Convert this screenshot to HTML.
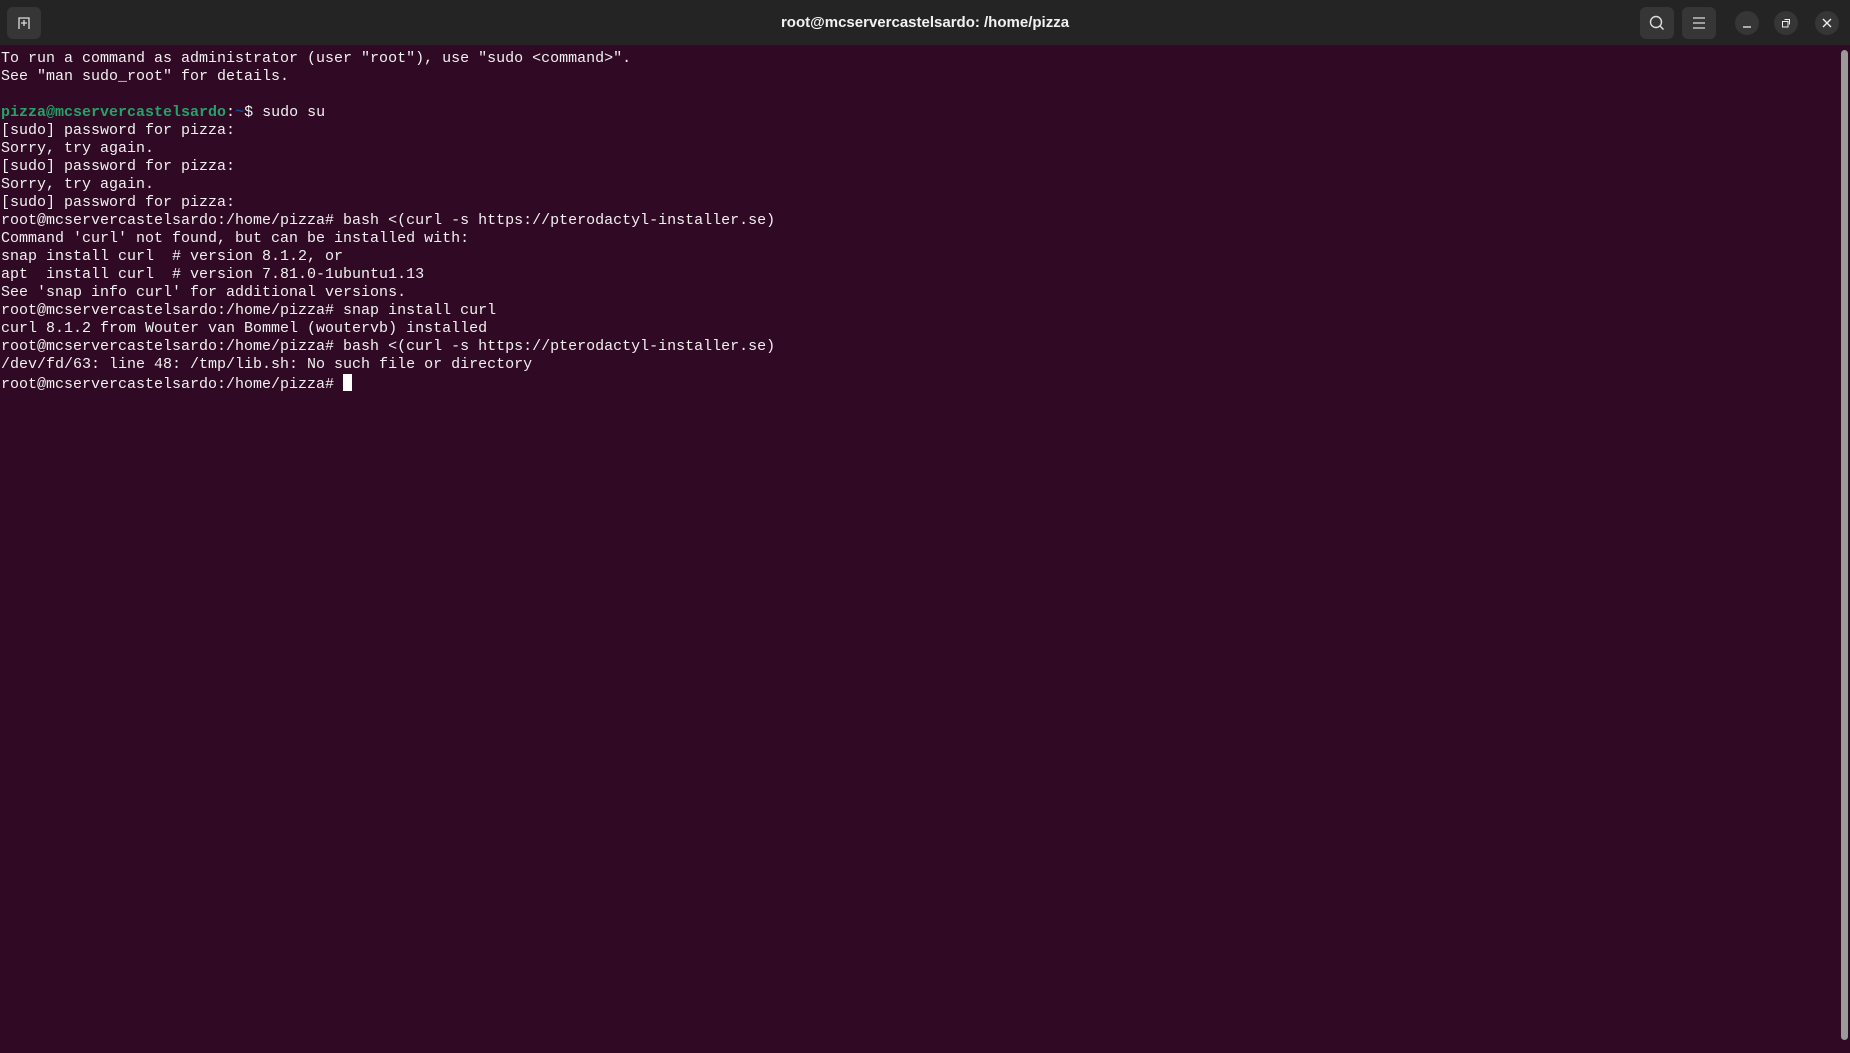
<!DOCTYPE html>
<html><head><meta charset="utf-8"><style>
html,body{margin:0;padding:0;width:1850px;height:1053px;overflow:hidden;background:#300a24}
.hdr{position:absolute;left:0;top:0;width:1850px;height:46px;background:#242424;border-bottom:1px solid #1a1a1a;box-sizing:border-box}
.title{position:absolute;left:0;right:0;top:0;height:46px;text-align:center;color:#f2f2f2;font:bold 15px "Liberation Sans",sans-serif;line-height:46px}
.btn{position:absolute;top:7px;width:34px;height:32px;border-radius:6px;background:#363636}
.cb{position:absolute;top:11px;width:24px;height:24px;border-radius:50%;background:#363636}
pre{position:absolute;left:1px;top:50px;margin:0;font-family:"Liberation Mono",monospace;font-size:15px;line-height:18px;color:#f0f0f0;letter-spacing:0}
.g{color:#26a269;font-weight:bold}.b{color:#12488b;font-weight:bold}
.cur{display:inline-block;width:9px;height:17px;background:#fff;vertical-align:-3px}
.sb{position:absolute;left:1841px;top:50px;width:7px;height:990px;border-radius:4px;background:#9a9a9a}
</style></head><body>
<div class="hdr">
 <div class="btn" style="left:7px"><svg width="34" height="32"><path d="M12 22V11h10v11M17 13v6M14 16h6" stroke="#ddd" stroke-width="1.3" fill="none"/></svg></div>
 <div class="title">root@mcservercastelsardo: /home/pizza</div>
 <div class="btn" style="left:1640px"><svg width="34" height="32"><circle cx="16" cy="15" r="5.5" stroke="#ddd" stroke-width="1.4" fill="none"/><path d="M20 19l3.5 3.5" stroke="#ddd" stroke-width="1.4"/></svg></div>
 <div class="btn" style="left:1682px"><svg width="34" height="32"><path d="M11 11h12M11 16h12M11 21h12" stroke="#ddd" stroke-width="1.3"/></svg></div>
 <div class="cb" style="left:1735px"><svg width="24" height="24"><path d="M8 16h8" stroke="#eee" stroke-width="1.3"/></svg></div>
 <div class="cb" style="left:1774px"><svg width="24" height="24"><rect x="8.5" y="10.5" width="5.5" height="5.5" stroke="#eee" fill="none"/><path d="M10.5 8.5h5v5" stroke="#eee" fill="none"/></svg></div>
 <div class="cb" style="left:1815px"><svg width="24" height="24"><path d="M8 8l8 8M16 8l-8 8" stroke="#eee" stroke-width="1.4"/></svg></div>
</div>
<pre>To run a command as administrator (user "root"), use "sudo &lt;command&gt;".
See "man sudo_root" for details.

<span class="g">pizza@mcservercastelsardo</span>:<span class="b">~</span>$ sudo su
[sudo] password for pizza: 
Sorry, try again.
[sudo] password for pizza: 
Sorry, try again.
[sudo] password for pizza: 
root@mcservercastelsardo:/home/pizza# bash &lt;(curl -s https://pterodactyl-installer.se)
Command 'curl' not found, but can be installed with:
snap install curl  # version 8.1.2, or
apt  install curl  # version 7.81.0-1ubuntu1.13
See 'snap info curl' for additional versions.
root@mcservercastelsardo:/home/pizza# snap install curl
curl 8.1.2 from Wouter van Bommel (woutervb) installed
root@mcservercastelsardo:/home/pizza# bash &lt;(curl -s https://pterodactyl-installer.se)
/dev/fd/63: line 48: /tmp/lib.sh: No such file or directory
root@mcservercastelsardo:/home/pizza# <span class="cur"></span></pre>
<div class="sb"></div>
</body></html>
